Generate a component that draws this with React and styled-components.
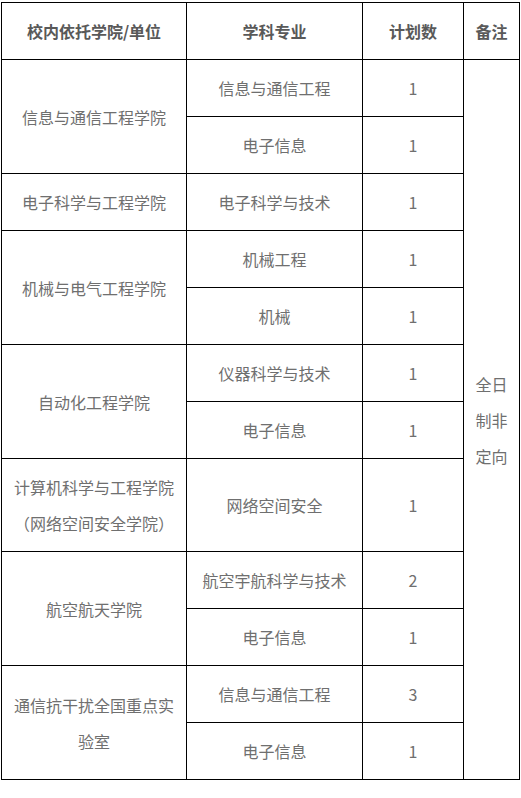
import React from 'react';
import styled, { createGlobalStyle } from 'styled-components';

const GlobalStyle = createGlobalStyle`
  html, body {
    margin: 0;
    padding: 0;
    background: #ffffff;
  }
  body {
    font-family: "Noto Sans CJK SC", "Noto Sans", "Liberation Sans", sans-serif;
  }
`;

const Page = styled.div`
  padding: 2px 0 0 1px;
`;

const Table = styled.table`
  width: 518px;
  border-collapse: collapse;
  table-layout: fixed;
`;

const Head = styled.th`
  border: 1px solid #000;
  padding: 10px 10px;
  line-height: 36px;
  font-size: 16px;
  font-weight: bold;
  color: #595959;
  text-align: center;
  vertical-align: middle;
`;

const Cell = styled.td`
  border: 1px solid #000;
  padding: 10px 10px;
  line-height: 36px;
  font-size: 16px;
  color: #6f6f6f;
  text-align: center;
  vertical-align: middle;
  word-break: break-all;
`;

const rows = [
  { unit: '信息与通信工程学院', majors: [['信息与通信工程', 1], ['电子信息', 1]] },
  { unit: '电子科学与工程学院', majors: [['电子科学与技术', 1]] },
  { unit: '机械与电气工程学院', majors: [['机械工程', 1], ['机械', 1]] },
  { unit: '自动化工程学院', majors: [['仪器科学与技术', 1], ['电子信息', 1]] },
  { unit: '计算机科学与工程学院（网络空间安全学院）', majors: [['网络空间安全', 1]] },
  { unit: '航空航天学院', majors: [['航空宇航科学与技术', 2], ['电子信息', 1]] },
  { unit: '通信抗干扰全国重点实验室', majors: [['信息与通信工程', 3], ['电子信息', 1]] },
];

const total = rows.reduce((n, r) => n + r.majors.length, 0);

export default function App() {
  return (
    <Page>
      <GlobalStyle />
      <Table>
        <colgroup>
          <col style={{ width: 185 }} />
          <col style={{ width: 176 }} />
          <col style={{ width: 101 }} />
          <col style={{ width: 56 }} />
        </colgroup>
        <thead>
          <tr>
            <Head>校内依托学院/单位</Head>
            <Head>学科专业</Head>
            <Head>计划数</Head>
            <Head>备注</Head>
          </tr>
        </thead>
        <tbody>
          {rows.map((r, i) =>
            r.majors.map(([major, count], j) => (
              <tr key={`${i}-${j}`}>
                {j === 0 && <Cell rowSpan={r.majors.length}>{r.unit}</Cell>}
                <Cell>{major}</Cell>
                <Cell>{count}</Cell>
                {i === 0 && j === 0 && <Cell rowSpan={total}>全日制非定向</Cell>}
              </tr>
            ))
          )}
        </tbody>
      </Table>
    </Page>
  );
}
